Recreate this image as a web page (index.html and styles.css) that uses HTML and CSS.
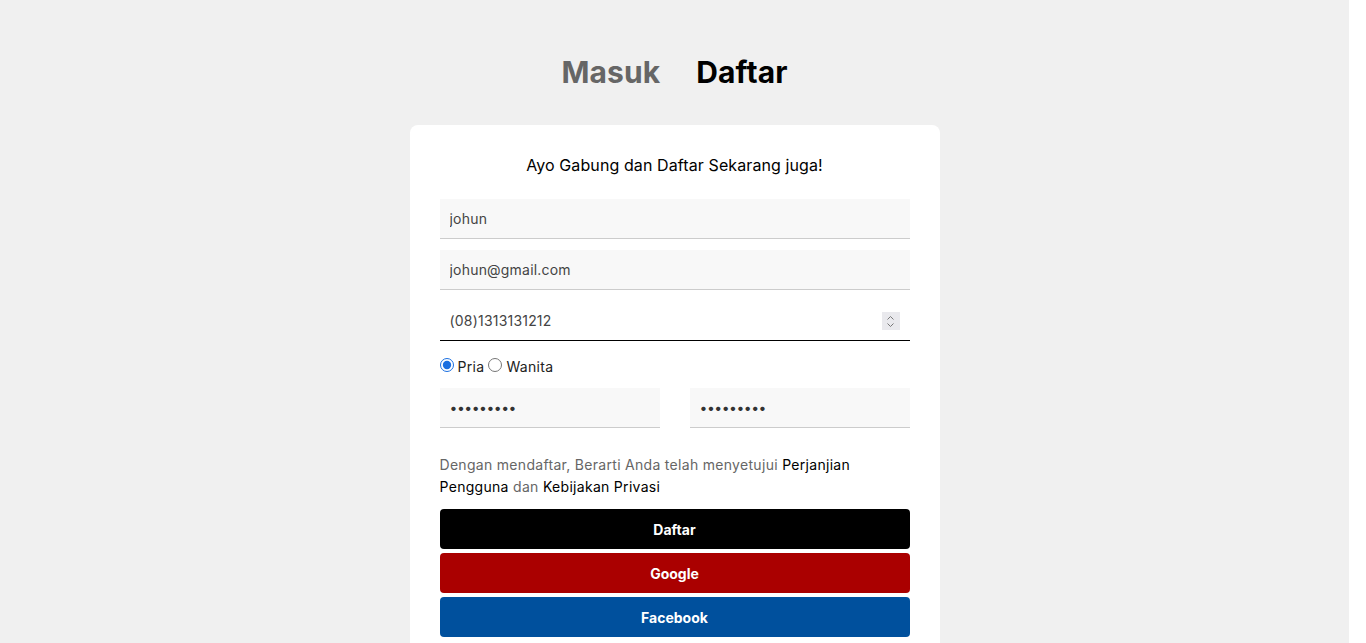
FILE: index.html
```html
<!DOCTYPE html>
<html lang="id">
<head>
<meta charset="utf-8">
<title>Daftar</title>
<link rel="stylesheet" href="styles.css">
</head>
<body>
<div class="page">
  <nav class="tabs">
    <a class="tab tab-inactive">Masuk</a>
    <a class="tab tab-active">Daftar</a>
  </nav>
  <form class="card">
    <p class="intro">Ayo Gabung dan Daftar Sekarang juga!</p>
    <input class="field" type="text" value="johun">
    <input class="field" type="email" value="johun@gmail.com">
    <div class="phone">
      <input class="field field-focus" type="text" placeholder="(08)1313131212">
      <span class="spin" aria-hidden="true">
        <svg width="9" height="13" viewBox="0 0 9 13"><path d="M1.5 4.5 L4.5 1.5 L7.5 4.5 M1.5 8.5 L4.5 11.5 L7.5 8.5" fill="none" stroke="#777" stroke-width="1"/></svg>
      </span>
    </div>
    <div class="gender">
      <label class="radio"><input type="radio" name="g" checked> Pria</label>
      <label class="radio"><input type="radio" name="g"> Wanita</label>
    </div>
    <div class="pw-row">
      <input class="field" type="password" value="123456789">
      <input class="field" type="password" value="123456789">
    </div>
    <p class="terms">Dengan mendaftar, Berarti Anda telah menyetujui <a class="link">Perjanjian Pengguna</a> dan <a class="link">Kebijakan Privasi</a></p>
    <div class="buttons">
      <button type="button" class="btn btn-black">Daftar</button>
      <button type="button" class="btn btn-red">Google</button>
      <button type="button" class="btn btn-blue">Facebook</button>
    </div>
  </form>
</div>
</body>
</html>
```
FILE: styles.css
```css
html { background: #ffffff; }
body {
  margin: 0;
  font-family: Inter, "Open Sans", sans-serif;
}
.page {
  background: #f0f0f0;
  min-height: 900px;
  margin-right: 17px;
  display: flex;
  flex-direction: column;
  align-items: center;
  padding-top: 52px;
  box-sizing: border-box;
}
.tabs {
  display: flex;
  gap: 36px;
  margin-bottom: 33px;
}
.tab {
  font-size: 30px;
  font-weight: 700;
  line-height: 40px;
  letter-spacing: 0.1px;
}
.tab-inactive { color: #666666; }
.tab-active { color: #000000; }
.card {
  width: 530px;
  box-sizing: border-box;
  background: #ffffff;
  border-radius: 8px;
  padding: 28px 30px 40px;
  display: flex;
  flex-direction: column;
}
.intro {
  margin: 0 0 22px;
  text-align: center;
  font-size: 16px;
  line-height: 24px;
  letter-spacing: 0.1px;
  color: #000;
}
.field {
  display: block;
  height: 40px;
  box-sizing: border-box;
  border: 0;
  border-bottom: 1px solid #cccccc;
  background: #f8f8f8;
  padding: 0 10px;
  font-family: inherit;
  font-size: 14px;
  letter-spacing: 0.2px;
  color: #444;
  margin: 0 0 11px;
  outline: none;
  width: 100%;
}
.field::placeholder { color: #444; opacity: 1; }
.phone { position: relative; }
.field-focus {
  background: #ffffff;
  border-bottom: 1px solid #000;
}
.spin {
  position: absolute;
  right: 10px;
  top: 11px;
  width: 18px;
  height: 18px;
  background: #e9e9ed;
  display: flex;
  align-items: center;
  justify-content: center;
}
.gender {
  display: flex;
  align-items: center;
  gap: 4px;
  font-size: 14px;
  letter-spacing: 0.3px;
  color: #222;
  margin-top: 6px;
  margin-bottom: 13px;
}
.radio { display: flex; align-items: center; gap: 4px; }
.radio input {
  margin: 0;
  width: 14px;
  height: 14px;
  position: relative;
  top: -2px;
  accent-color: #1a6fe0;
}
.pw-row {
  display: grid;
  grid-template-columns: 1fr 1fr;
  gap: 30px;
}
.pw-row .field { letter-spacing: -0.5px; color: #333; }
.terms {
  margin: 15px 0 11px;
  font-size: 14px;
  line-height: 22px;
  letter-spacing: 0.3px;
  color: #666;
}
.link { color: #000; }
.buttons { display: flex; flex-direction: column; gap: 4px; }
.btn {
  height: 40px;
  border: 0;
  border-radius: 4px;
  color: #fff;
  font-family: inherit;
  font-weight: 700;
  font-size: 14px;
}
.btn-black { background: #000; }
.btn-red { background: #aa0000; }
.btn-blue { background: #00509d; }
```
